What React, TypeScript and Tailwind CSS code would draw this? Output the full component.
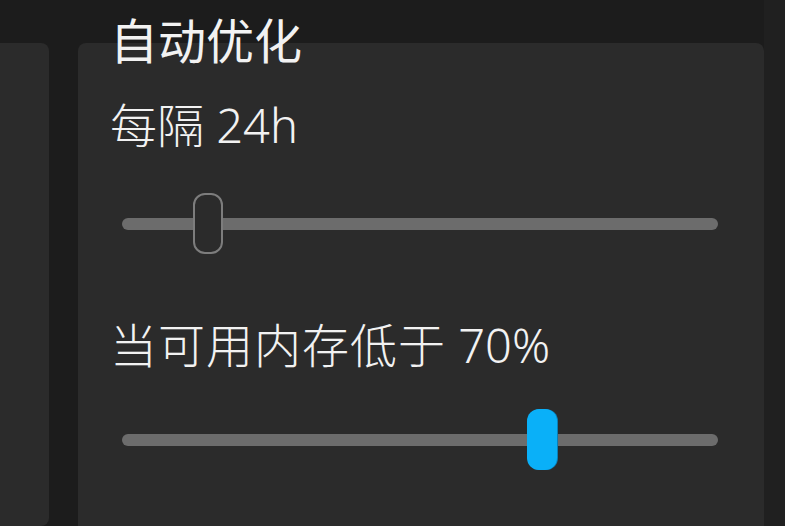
const font = { fontFamily: '"Noto Sans", "Noto Sans CJK SC", sans-serif' };

function Slider({ value, active = false }: { value: number; active?: boolean }) {
  return (
    <div className="relative h-[61px]">
      <div className="absolute left-[12px] right-[46px] top-1/2 h-[12px] -translate-y-1/2 rounded-full bg-[#6c6c6c]" />
      <div className="absolute left-[12px] right-[46px] top-0 h-full">
        <div
          className={`absolute top-0 h-full w-[30px] -translate-x-1/2 rounded-[12px] ${
            active ? 'bg-[#0ab0f8] shadow-[1px_0_0_#0a7fb8]' : 'border-2 border-[#7d7d7d] bg-[#2b2b2b]'
          }`}
          style={{ left: `${value}%` }}
        />
      </div>
    </div>
  );
}

export default function App() {
  return (
    <div className="flex h-[526px] w-[785px] overflow-hidden bg-[#1c1c1c] text-[#f2f2f2]" style={font}>
      <div className="mt-[43px] w-[49px] rounded-r-[8px] bg-[#2b2b2b]" />
      <div className="ml-[29px] mt-[43px] flex w-[686px] flex-col rounded-t-[8px] bg-[#2b2b2b] pl-[32px]">
        <h1 className="-mt-[26px] text-[48px] font-normal leading-none">自动优化</h1>
        <p className="mt-[37px] text-[47px] font-light leading-none">每隔 24h</p>
        <div className="mt-[44px]">
          <Slider value={14.4} />
        </div>
        <p className="mt-[68px] text-[47px] font-light leading-none">
          <span className="tracking-[1px]">当可用内存低于</span> 70%
        </p>
        <div className="mt-[40px]">
          <Slider value={70.5} active />
        </div>
      </div>
      <div className="flex-1 bg-[#202020]" />
    </div>
  );
}
